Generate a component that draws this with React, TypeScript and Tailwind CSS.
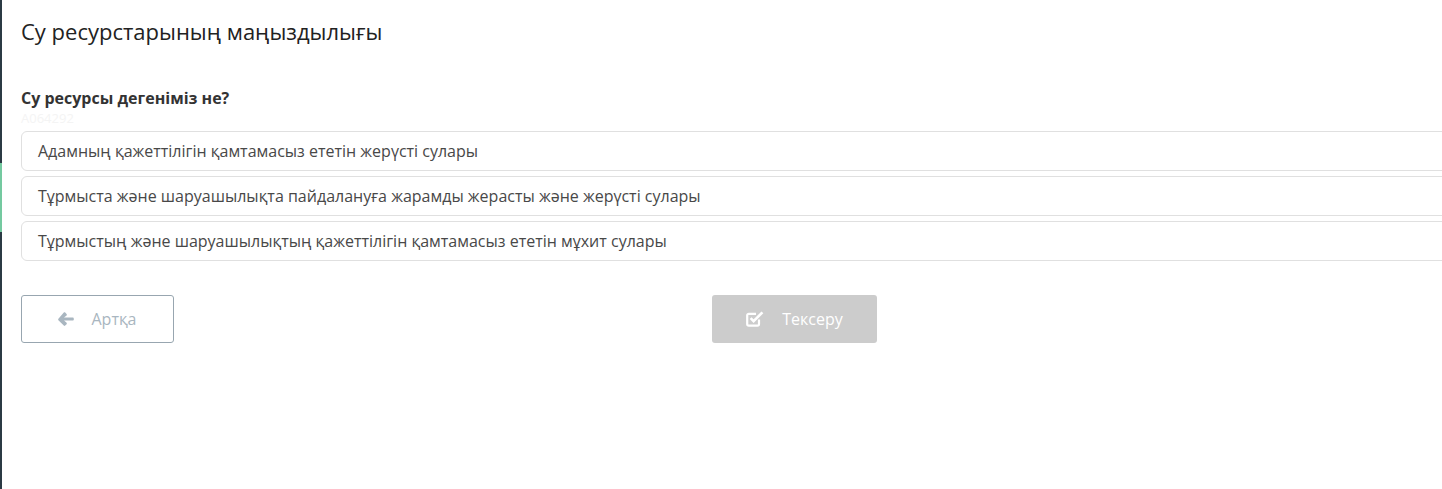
import React from 'react';

const options = [
  'Адамның қажеттілігін қамтамасыз ететін жерүсті сулары',
  'Тұрмыста және шаруашылықта пайдалануға жарамды жерасты және жерүсті сулары',
  'Тұрмыстың және шаруашылықтың қажеттілігін қамтамасыз ететін мұхит сулары',
];

const ArrowLeft = () => (
  <svg viewBox="0 0 16 14" className="h-[14px] w-[16px]" fill="currentColor">
    <path d="M7.2 0.6 L8.6 2 C9 2.4 9 3 8.6 3.4 L6 5.6 H14.6 C15.3 5.6 15.8 6.1 15.8 6.8 V7.4 C15.8 8.1 15.3 8.6 14.6 8.6 H6 L8.6 10.8 C9 11.2 9 11.8 8.6 12.2 L7.2 13.6 C6.8 14 6.2 14 5.8 13.6 L0.4 8.2 C0 7.8 0 7.2 0.4 6.8 L5.8 0.6 C6.2 0.2 6.8 0.2 7.2 0.6 Z" />
  </svg>
);

const CheckSquare = () => (
  <svg viewBox="0 0 18 16" className="h-[16px] w-[18px]" fill="none" stroke="currentColor" strokeWidth="2.2">
    <path d="M13 8.5 V13 C13 14 12.3 14.6 11.4 14.6 H2.8 C1.9 14.6 1.2 14 1.2 13 V4.4 C1.2 3.5 1.9 2.8 2.8 2.8 H10" />
    <path d="M4.6 7.2 L7.6 10.2 L16.4 1.4" strokeWidth="2.6" />
  </svg>
);

export default function App() {
  return (
    <div className="flex h-[489px] w-[1442px] overflow-hidden bg-white" style={{ fontFamily: '"Open Sans", "Noto Sans", sans-serif' }}>
      <div className="flex w-[2px] shrink-0 flex-col bg-[#2b3a44]">
        <div className="h-[163px]" />
        <div className="h-[69px] bg-[#74c9a0]" />
      </div>

      <div className="w-[1566px] shrink-0 pl-[19px]">
        <h1 className="pt-[17px] text-[22px] leading-[28px] text-[#222]">Су ресурстарының маңыздылығы</h1>

        <div className="mt-[42px] text-[16px] font-bold leading-[22px] text-[#333]">Су ресурсы дегеніміз не?</div>
        <div className="text-[13px] leading-[18px] text-[#f4f4f4]">А064292</div>

        <div className="mt-[4px] flex flex-col gap-[5px]">
          {options.map((o) => (
            <div key={o} className="flex h-[40px] items-center rounded-[6px] border border-[#e0e0e0] px-[16px] text-[16px] text-[#484848]">
              {o}
            </div>
          ))}
        </div>

        <div className="mt-[34px] grid grid-cols-3">
          <div>
            <button className="flex h-[48px] w-[153px] items-center justify-center gap-[17px] rounded-[3px] border border-[#98a6b0] text-[16px] text-[#a9b6c0]">
              <ArrowLeft />
              <span>Артқа</span>
            </button>
          </div>
          <div className="flex justify-center">
            <button className="flex h-[48px] w-[165px] items-center justify-center gap-[18px] rounded-[3px] bg-[#cccccc] text-[16px] text-white">
              <CheckSquare />
              <span>Тексеру</span>
            </button>
          </div>
          <div />
        </div>
      </div>
    </div>
  );
}
